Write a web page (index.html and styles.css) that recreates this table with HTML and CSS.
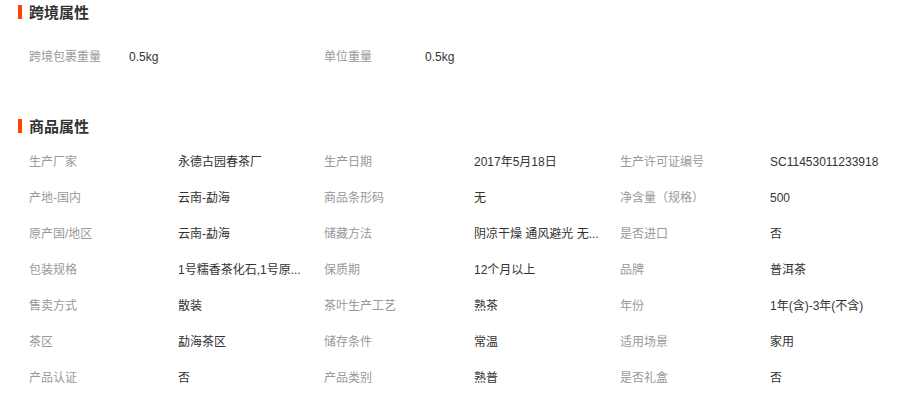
FILE: index.html
```html
<!DOCTYPE html>
<html lang="zh-CN">
<head>
<meta charset="utf-8">
<title>属性</title>
<link rel="stylesheet" href="styles.css">
</head>
<body>
<div class="page">
  <h2 class="sec-title">跨境属性</h2>
  <div class="grid grid-cross">
    <div class="lbl">跨境包裹重量</div><div class="val">0.5kg</div>
    <div class="lbl">单位重量</div><div class="val">0.5kg</div>
  </div>

  <h2 class="sec-title sec-title-2">商品属性</h2>
  <div class="grid grid-attr">
    <div class="lbl">生产厂家</div><div class="val">永德古园春茶厂</div>
    <div class="lbl">生产日期</div><div class="val">2017年5月18日</div>
    <div class="lbl">生产许可证编号</div><div class="val">SC11453011233918</div>

    <div class="lbl">产地-国内</div><div class="val">云南-勐海</div>
    <div class="lbl">商品条形码</div><div class="val">无</div>
    <div class="lbl">净含量（规格）</div><div class="val">500</div>

    <div class="lbl">原产国/地区</div><div class="val">云南-勐海</div>
    <div class="lbl">储藏方法</div><div class="val">阴凉干燥 通风避光 无...</div>
    <div class="lbl">是否进口</div><div class="val">否</div>

    <div class="lbl">包装规格</div><div class="val">1号糯香茶化石,1号原...</div>
    <div class="lbl">保质期</div><div class="val">12个月以上</div>
    <div class="lbl">品牌</div><div class="val">普洱茶</div>

    <div class="lbl">售卖方式</div><div class="val">散装</div>
    <div class="lbl">茶叶生产工艺</div><div class="val">熟茶</div>
    <div class="lbl">年份</div><div class="val">1年(含)-3年(不含)</div>

    <div class="lbl">茶区</div><div class="val">勐海茶区</div>
    <div class="lbl">储存条件</div><div class="val">常温</div>
    <div class="lbl">适用场景</div><div class="val">家用</div>

    <div class="lbl">产品认证</div><div class="val">否</div>
    <div class="lbl">产品类别</div><div class="val">熟普</div>
    <div class="lbl">是否礼盒</div><div class="val">否</div>
  </div>
</div>
</body>
</html>
```

FILE: styles.css
```css
html, body {
  margin: 0;
  padding: 0;
  background: #fff;
}
body {
  font-family: "Liberation Sans", Arial, "Noto Sans CJK SC", sans-serif;
  font-size: 12px;
  color: #333;
}
.page {
  padding-top: 5px;
}
.sec-title {
  margin: 0 0 0 18px;
  padding-left: 7px;
  border-left: 4px solid #ff4400;
  height: 14px;
  line-height: 15px;
  font-size: 15px;
  font-weight: bold;
  color: #333;
}
.sec-title-2 {
  margin-top: 44px;
}
.grid {
  display: grid;
  padding-left: 29px;
  grid-auto-rows: 36px;
  line-height: 36px;
}
.grid-cross {
  margin-top: 20px;
  grid-template-columns: 100px 195px 101px 1fr;
}
.grid-attr {
  margin-top: 11px;
  grid-template-columns: 149px 146px 150px 146px 150px 1fr;
}
.lbl {
  color: #999;
  white-space: nowrap;
}
.val {
  color: #333;
  white-space: nowrap;
}
```
